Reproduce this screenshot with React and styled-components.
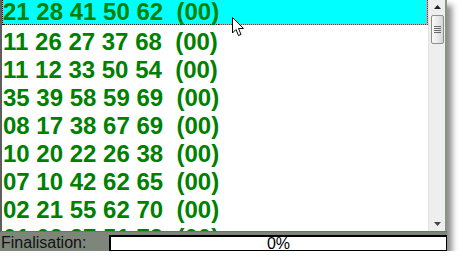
import React from "react";
import styled, { createGlobalStyle } from "styled-components";

const Global = createGlobalStyle`
  html, body { margin: 0; padding: 0; background: #ffffff; }
  body { font-family: "Liberation Sans", Arial, sans-serif; overflow: hidden; }
`;

const Frame = styled.div`
  position: relative;
  width: 447px;
  height: 251px;
  display: flex;
  flex-direction: column;
  box-shadow: 5px 5px 6px rgba(0, 0, 0, 0.45);
  background: #ffffff;
`;

const Main = styled.div`
  display: flex;
  height: 231px;
  border-left: 2px solid #5c5f5c;
  border-right: 2px solid #8a9386;
`;

const List = styled.div`
  flex: 1;
  overflow: hidden;
  background: #ffffff;
`;

const Row = styled.div`
  display: flex;
  flex-shrink: 0;
  height: ${(p) => (p.$selected ? "25px" : "28px")};
  margin-bottom: ${(p) => (p.$selected ? "3px" : "0")};
  background: ${(p) => (p.$selected ? "#00ffff" : "transparent")};
  border-left: 1px ${(p) => (p.$selected ? "dotted #000" : "solid transparent")};
  box-sizing: border-box;
`;

const Numbers = styled.span`
  font-family: "Liberation Sans", Arial, sans-serif;
  font-weight: bold;
  font-size: 24px;
  line-height: ${(p) => (p.$selected ? "24px" : "28px")};
  color: #008000;
  white-space: pre;
  box-sizing: border-box;
  border-bottom: 1px ${(p) => (p.$selected ? "dotted #000" : "solid transparent")};
`;

const Filler = styled.span`
  flex: 1;
  box-sizing: border-box;
  border-bottom: 1px ${(p) => (p.$selected ? "dotted #ff0000" : "solid transparent")};
  border-right: 1px ${(p) => (p.$selected ? "dotted #ff0000" : "solid transparent")};
`;

const ScrollBar = styled.div`
  width: 17px;
  display: flex;
  flex-direction: column;
  align-items: center;
  background: #eeeeee;
  border-left: 1px solid #e2e2e2;
  box-sizing: border-box;
`;

const ArrowBox = styled.div`
  height: 14px;
  width: 100%;
  display: flex;
  align-items: center;
  justify-content: center;
`;

const Thumb = styled.div`
  width: 13px;
  height: 29px;
  margin-top: 1px;
  box-sizing: border-box;
  border: 1px solid #8e8e8e;
  border-radius: 2px;
  background: linear-gradient(to right, #fafafa, #e6e6e6 60%, #d4d4d4);
  display: flex;
  flex-direction: column;
  align-items: center;
  justify-content: center;
  gap: 1px;
`;

const Grip = styled.div`
  width: 7px;
  height: 1px;
  background: #6a6a6a;
`;

const Track = styled.div`
  flex: 1;
`;

const StatusBar = styled.div`
  height: 20px;
  box-sizing: border-box;
  display: flex;
  align-items: flex-start;
  background: #7e867c;
  border-top: 1px solid #6c7469;
  padding-top: 3px;
`;

const Label = styled.span`
  width: 109px;
  padding-left: 1px;
  box-sizing: border-box;
  font-size: 16px;
  line-height: 15px;
  color: #111111;
  white-space: nowrap;
`;

const Progress = styled.div`
  flex: 1;
  height: 16px;
  box-sizing: border-box;
  background: #ffffff;
  border: 1px solid #000000;
  border-top-width: 2px;
  border-left-width: 2px;
  display: flex;
  align-items: center;
  justify-content: center;
  font-size: 16px;
  line-height: 13px;
  color: #000000;
`;

const Cursor = styled.svg`
  position: absolute;
  left: 232px;
  top: 17px;
`;

const rows = [
  "21 28 41 50 62  (00)",
  "11 26 27 37 68  (00)",
  "11 12 33 50 54  (00)",
  "35 39 58 59 69  (00)",
  "08 17 38 67 69  (00)",
  "10 20 22 26 38  (00)",
  "07 10 42 62 65  (00)",
  "02 21 55 62 70  (00)",
  "01 09 27 51 73  (00)",
];

export default function App() {
  return (
    <>
      <Global />
      <Frame>
        <Main>
          <List>
            {rows.map((r, i) => (
              <Row key={i} $selected={i === 0}>
                <Numbers $selected={i === 0}>{r}</Numbers>
                <Filler $selected={i === 0} />
              </Row>
            ))}
          </List>
          <ScrollBar>
            <ArrowBox>
              <svg width="7" height="4" viewBox="0 0 7 4">
                <path d="M3.5 0 L7 4 L0 4 Z" fill="#222" />
              </svg>
            </ArrowBox>
            <Thumb>
              <Grip />
              <Grip />
              <Grip />
              <Grip />
            </Thumb>
            <Track />
            <ArrowBox>
              <svg width="7" height="4" viewBox="0 0 7 4">
                <path d="M0 0 L7 0 L3.5 4 Z" fill="#444" />
              </svg>
            </ArrowBox>
          </ScrollBar>
        </Main>
        <StatusBar>
          <Label>Finalisation:</Label>
          <Progress>0%</Progress>
        </StatusBar>
        <Cursor width="13" height="20" viewBox="0 0 13 20">
          <path
            d="M0.5 0.5 L0.5 16 L4 12.5 L6.5 18.5 L9 17.5 L6.5 11.5 L11.5 11.5 Z"
            fill="#ffffff"
            stroke="#000000"
            strokeWidth="1"
            strokeLinejoin="miter"
          />
        </Cursor>
      </Frame>
    </>
  );
}
